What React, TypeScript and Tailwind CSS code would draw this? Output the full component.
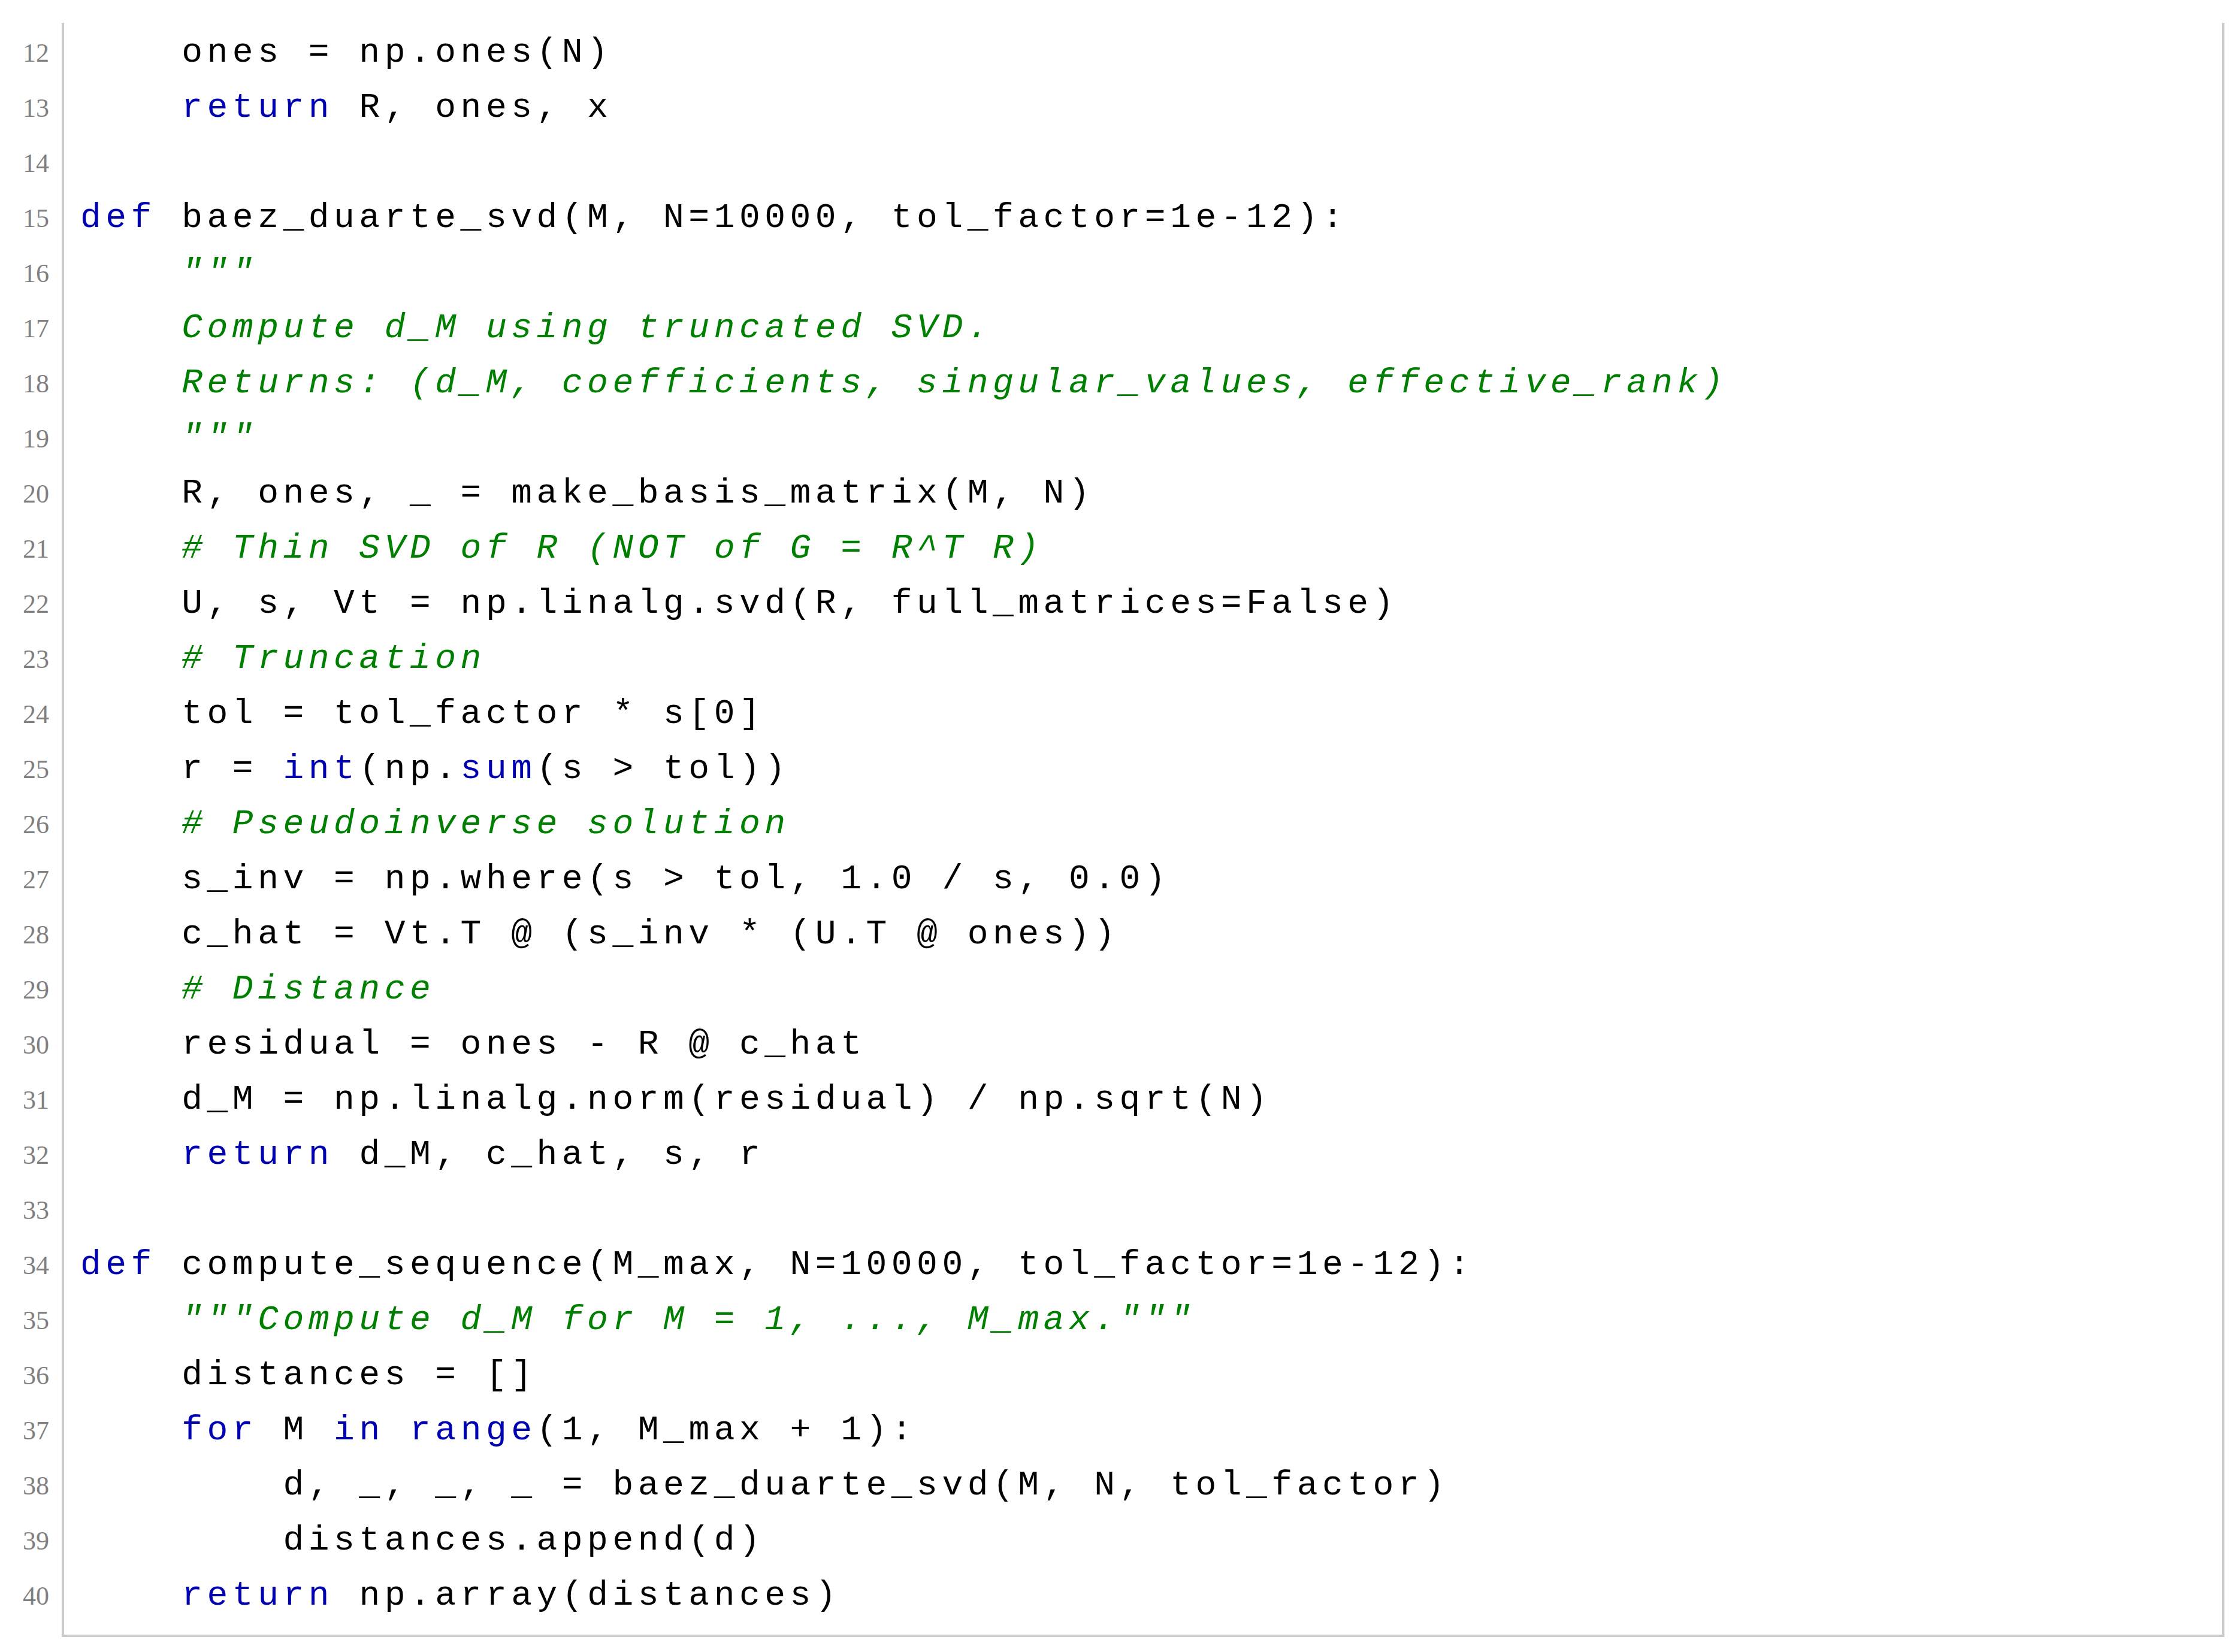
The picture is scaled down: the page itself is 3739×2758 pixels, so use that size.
const KEYWORDS = /(\b(?:def|return|for|in|int|sum|range)\b)/;

// each entry: [line number, text, is the whole line a comment / docstring]
const lines: [number, string, boolean][] = [
  [12, '    ones = np.ones(N)', false],
  [13, '    return R, ones, x', false],
  [14, '', false],
  [15, 'def baez_duarte_svd(M, N=10000, tol_factor=1e-12):', false],
  [16, '    """', true],
  [17, '    Compute d_M using truncated SVD.', true],
  [18, '    Returns: (d_M, coefficients, singular_values, effective_rank)', true],
  [19, '    """', true],
  [20, '    R, ones, _ = make_basis_matrix(M, N)', false],
  [21, '    # Thin SVD of R (NOT of G = R^T R)', true],
  [22, '    U, s, Vt = np.linalg.svd(R, full_matrices=False)', false],
  [23, '    # Truncation', true],
  [24, '    tol = tol_factor * s[0]', false],
  [25, '    r = int(np.sum(s > tol))', false],
  [26, '    # Pseudoinverse solution', true],
  [27, '    s_inv = np.where(s > tol, 1.0 / s, 0.0)', false],
  [28, '    c_hat = Vt.T @ (s_inv * (U.T @ ones))', false],
  [29, '    # Distance', true],
  [30, '    residual = ones - R @ c_hat', false],
  [31, '    d_M = np.linalg.norm(residual) / np.sqrt(N)', false],
  [32, '    return d_M, c_hat, s, r', false],
  [33, '', false],
  [34, 'def compute_sequence(M_max, N=10000, tol_factor=1e-12):', false],
  [35, '    """Compute d_M for M = 1, ..., M_max."""', true],
  [36, '    distances = []', false],
  [37, '    for M in range(1, M_max + 1):', false],
  [38, '        d, _, _, _ = baez_duarte_svd(M, N, tol_factor)', false],
  [39, '        distances.append(d)', false],
  [40, '    return np.array(distances)', false],
];

const CodeLine = ({ text, comment }: { text: string; comment: boolean }) => {
  if (comment) {
    return <div className="h-[92px] whitespace-pre italic text-[#008000]">{text}</div>;
  }
  const parts = text.split(KEYWORDS);
  return (
    <div className="h-[92px] whitespace-pre text-black">
      {parts.map((p, i) =>
        i % 2 === 1 ? (
          <span key={i} className="text-[#0000b3]">
            {p}
          </span>
        ) : (
          <span key={i}>{p}</span>
        )
      )}
    </div>
  );
};

const App = () => {
  return (
    <div className="w-[3739px] h-[2758px] bg-white flex items-start overflow-hidden">
      <div className="w-[82px] pt-[43px] flex flex-col text-right font-['Liberation_Serif',serif] text-[44px] leading-[92px] text-[#808080]">
        {lines.map(([n]) => (
          <div key={n} className="h-[92px]">
            {n}
          </div>
        ))}
      </div>
      <div className="ml-[21px] mt-[38px] w-[3610px] border-l-4 border-r-4 border-b-4 border-[#cccccc] pt-[4px] pb-[19px] pl-[27px] font-['Liberation_Mono',monospace] text-[58px] leading-[92px] tracking-[7.5px]">
        {lines.map(([n, text, comment]) => (
          <CodeLine key={n} text={text} comment={comment} />
        ))}
      </div>
    </div>
  );
};

export default App;
